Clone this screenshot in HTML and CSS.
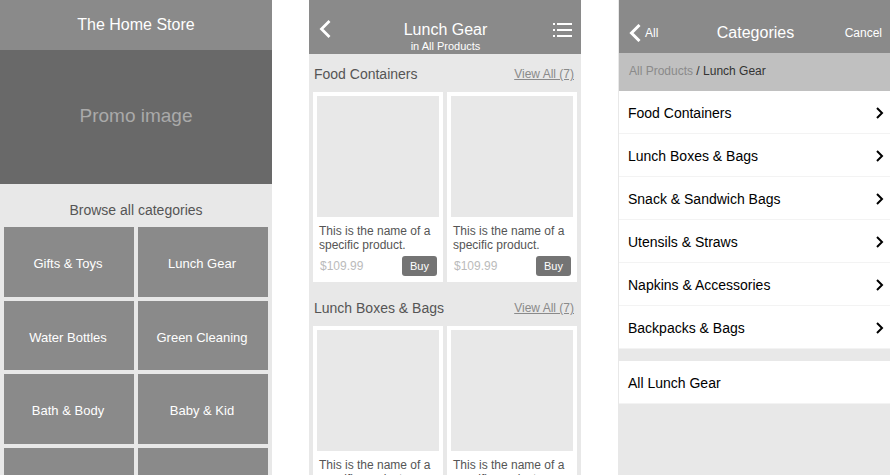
FILE: index.html
```html
<!DOCTYPE html>
<html lang="en">
<head>
<meta charset="utf-8">
<meta name="viewport" content="width=device-width, initial-scale=1">
<title>The Home Store</title>
<link rel="stylesheet" href="styles.css">
</head>
<body>
<div class="screens">

  <main class="screen">
    <header class="bar bar-home"><h1 class="title">The Home Store</h1></header>
    <div class="promo">Promo image</div>
    <h2 class="browse">Browse all categories</h2>
    <nav class="tiles">
      <a class="tile" href="#">Gifts &amp; Toys</a>
      <a class="tile" href="#">Lunch Gear</a>
      <a class="tile" href="#">Water Bottles</a>
      <a class="tile" href="#">Green Cleaning</a>
      <a class="tile" href="#">Bath &amp; Body</a>
      <a class="tile" href="#">Baby &amp; Kid</a>
      <div class="tile"></div>
      <div class="tile"></div>
    </nav>
  </main>

  <section class="screen">
    <header class="bar bar-products">
      <button class="icon-button" type="button" aria-label="Back">
        <svg width="12" height="18" viewBox="0 0 12 18"><path d="M10.500 1 2.500 9l8 8" fill="none" stroke="#fff" stroke-width="2.800"/></svg>
      </button>
      <div class="heading">
        <h1 class="title">Lunch Gear</h1>
        <p class="subtitle">in All Products</p>
      </div>
      <button class="icon-button icon-list" type="button" aria-label="Categories">
        <svg width="20" height="16" viewBox="0 0 20 16"><path d="M1 2h2M1 8h2M1 14h2M5 2h15M5 8h15M5 14h15" fill="none" stroke="#fff" stroke-width="2"/></svg>
      </button>
    </header>

    <section class="group">
      <div class="group-head"><h2>Food Containers</h2><a href="#">View All (7)</a></div>
      <div class="cards">
        <article class="card">
          <div class="photo"></div>
          <p class="name">This is the name of a specific product.</p>
          <div class="purchase"><span class="price">$109.99</span><button class="buy" type="button">Buy</button></div>
        </article>
        <article class="card">
          <div class="photo"></div>
          <p class="name">This is the name of a specific product.</p>
          <div class="purchase"><span class="price">$109.99</span><button class="buy" type="button">Buy</button></div>
        </article>
      </div>
    </section>

    <section class="group">
      <div class="group-head"><h2>Lunch Boxes &amp; Bags</h2><a href="#">View All (7)</a></div>
      <div class="cards">
        <article class="card">
          <div class="photo"></div>
          <p class="name">This is the name of a specific product.</p>
        </article>
        <article class="card">
          <div class="photo"></div>
          <p class="name">This is the name of a specific product.</p>
        </article>
      </div>
    </section>
  </section>

  <section class="screen screen-categories">
    <header class="bar bar-categories">
      <button class="text-button" type="button">
        <svg width="12" height="18" viewBox="0 0 12 18"><path d="M10.500 1 2.500 9l8 8" fill="none" stroke="#fff" stroke-width="3"/></svg>
        All
      </button>
      <h1 class="title">Categories</h1>
      <button class="text-button text-button-end" type="button">Cancel</button>
    </header>
    <nav class="crumbs"><a href="#">All Products</a> / Lunch Gear</nav>
    <nav class="list">
      <a class="row" href="#">Food Containers<svg width="8" height="12" viewBox="0 0 8 12"><path d="m1 1 5 5-5 5" fill="none" stroke="#000" stroke-width="2"/></svg></a>
      <a class="row" href="#">Lunch Boxes &amp; Bags<svg width="8" height="12" viewBox="0 0 8 12"><path d="m1 1 5 5-5 5" fill="none" stroke="#000" stroke-width="2"/></svg></a>
      <a class="row" href="#">Snack &amp; Sandwich Bags<svg width="8" height="12" viewBox="0 0 8 12"><path d="m1 1 5 5-5 5" fill="none" stroke="#000" stroke-width="2"/></svg></a>
      <a class="row" href="#">Utensils &amp; Straws<svg width="8" height="12" viewBox="0 0 8 12"><path d="m1 1 5 5-5 5" fill="none" stroke="#000" stroke-width="2"/></svg></a>
      <a class="row" href="#">Napkins &amp; Accessories<svg width="8" height="12" viewBox="0 0 8 12"><path d="m1 1 5 5-5 5" fill="none" stroke="#000" stroke-width="2"/></svg></a>
      <a class="row" href="#">Backpacks &amp; Bags<svg width="8" height="12" viewBox="0 0 8 12"><path d="m1 1 5 5-5 5" fill="none" stroke="#000" stroke-width="2"/></svg></a>
    </nav>
    <nav class="list list-all"><a class="row" href="#">All Lunch Gear</a></nav>
  </section>

</div>
</body>
</html>
```
FILE: styles.css
```css
* { box-sizing: border-box; }

body {
  margin: 0;
  background: #fff;
  color: #555;
  font: 14px/16px "Liberation Sans", Arial, sans-serif;
}

h1, h2, p { margin: 0; font-weight: 400; }
button { margin: 0; padding: 0; border: 0; background: none; color: inherit; font: inherit; }
svg { display: block; flex: none; }

.screens {
  display: grid;
  grid-template-columns: repeat(3, minmax(0, 1fr));
  gap: 37px;
  height: 100vh;
}
.screen { overflow: hidden; background: #e8e8e8; }
.screen-categories { border-left: 1px solid #e8e8e8; }

/* Header bars */
.bar { background: #8a8a8a; color: #fff; }
.title { font-size: 16px; line-height: 20px; text-align: center; }
.bar-home { padding: 15px 8px; }
.bar-products, .bar-categories {
  display: grid;
  grid-template-columns: 1fr auto 1fr;
  align-items: center;
}
.bar-products { padding: 20px 9px 2px 10px; align-items: start; }
.bar-categories { padding: 23px 8px 10px 10px; }
.subtitle { font-size: 11px; line-height: 12px; text-align: center; }
.icon-button { justify-self: start; }
.icon-list { justify-self: end; padding-top: 2px; }
.text-button { display: flex; align-items: center; gap: 4px; justify-self: start; font-size: 12px; }
.text-button-end { justify-self: end; }

/* Home */
.promo {
  display: flex;
  align-items: center;
  justify-content: center;
  height: 134px;
  padding-bottom: 2px;
  background: #696969;
  color: #aaa;
  font-size: 19px;
}
.browse { padding: 18px 8px 9px; font-size: 14px; text-align: center; }
.tiles {
  display: grid;
  grid-template-columns: 1fr 1fr;
  grid-auto-rows: 70px 69px;
  gap: 4px;
  padding: 0 4px;
}
.tile {
  display: flex;
  align-items: center;
  justify-content: center;
  padding: 4px 2px 0 0;
  background: #8a8a8a;
  color: #fff;
  font-size: 13px;
  text-decoration: none;
}

/* Products */
.group { padding: 0 4px 6px; }
.group-head {
  display: flex;
  align-items: center;
  justify-content: space-between;
  padding: 12px 3px 10px 1px;
}
.group-head h2 { font-size: 14px; }
.group-head a { color: #8a8a8a; font-size: 12px; }
.cards { display: grid; grid-template-columns: 1fr 1fr; gap: 4px; }
.card { padding: 4px 4px 6px; background: #fff; }
.photo { height: 121px; background: #e8e8e8; }
.name { padding: 7px 0 4px 2px; font-size: 12px; line-height: 14px; }
.purchase { display: flex; align-items: center; justify-content: space-between; padding: 0 2px 0 3px; }
.price { color: #bbb; font-size: 12px; }
.buy { width: 35px; height: 20px; border-radius: 3px; background: #747474; color: #fff; font-size: 11px; }

/* Categories */
.crumbs { padding: 10px 10px 12px; background: #c0c0c0; color: #333; font-size: 12px; }
.crumbs a { color: #8a8a8a; text-decoration: none; }
.row {
  display: flex;
  align-items: center;
  justify-content: space-between;
  height: 43px;
  padding: 1px 6px 0 9px;
  border-bottom: 1px solid #f3f3f3;
  background: #fff;
  color: #000;
  text-decoration: none;
}
.list-all { margin-top: 12px; }
```
